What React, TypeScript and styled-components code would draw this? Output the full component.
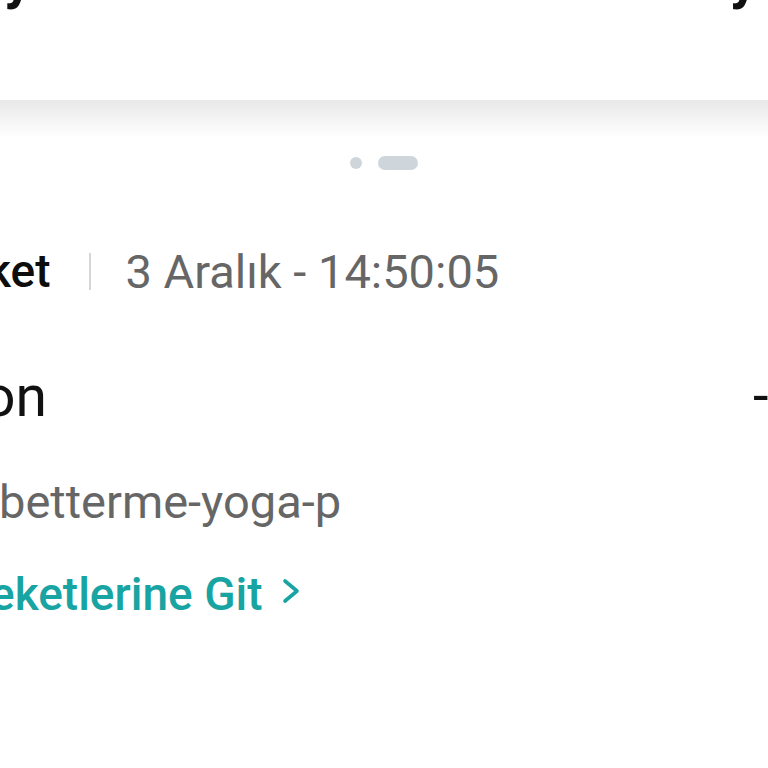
import styled, { createGlobalStyle } from "styled-components";

const GlobalStyle = createGlobalStyle`
  html, body {
    margin: 0;
    padding: 0;
    background: #ffffff;
  }
  body {
    font-family: Roboto, "Noto Sans", "Liberation Sans", sans-serif;
  }
`;

const Screen = styled.div`
  width: 768px;
  height: 768px;
  overflow: hidden;
  background: #ffffff;
  display: flex;
  flex-direction: column;
`;

const TopBar = styled.div`
  height: 100px;
  overflow: hidden;
  display: flex;
  justify-content: space-between;
  padding: 0 10px 0 4px;
`;

const TopText = styled.span`
  font-size: 56px;
  line-height: 1;
  font-weight: 700;
  color: #111111;
  margin-top: -49px;
`;

const Sheet = styled.div`
  display: flex;
  flex-direction: column;
`;

const Shade = styled.div`
  height: 38px;
  background: linear-gradient(#e8e8e8, #f6f6f6 60%, #ffffff);
`;

const Pager = styled.div`
  display: flex;
  justify-content: center;
  align-items: center;
  gap: 16px;
  margin-top: 18px;
  height: 14px;
`;

const Dot = styled.span<{ $wide?: boolean }>`
  display: block;
  width: ${(p) => (p.$wide ? "40px" : "12px")};
  height: ${(p) => (p.$wide ? "14px" : "12px")};
  border-radius: 8px;
  background: #cfd6db;
`;

const Row = styled.div<{ $top: number; $line: number }>`
  display: flex;
  align-items: center;
  margin-top: ${(p) => p.$top}px;
  height: ${(p) => p.$line}px;
  white-space: nowrap;
`;

const Text = styled.span<{ $size: number; $weight?: number; $color: string; $clip?: number }>`
  font-size: ${(p) => p.$size}px;
  font-weight: ${(p) => p.$weight ?? 400};
  color: ${(p) => p.$color};
  margin-left: ${(p) => p.$clip ?? 0}px;
  line-height: 1;
  flex-shrink: 0;
`;

const Divider = styled.span`
  width: 2px;
  height: 37px;
  background: #d6d6d6;
  margin: 0 35px 0 38px;
  flex-shrink: 0;
`;

const Amount = styled.span`
  margin-left: auto;
  width: 15px;
  flex-shrink: 0;
  font-size: 56px;
  line-height: 1;
  color: #111111;
  white-space: nowrap;
`;

const LinkRow = styled(Row)`
  color: #18a4a2;
`;

const Chevron = styled.svg`
  width: 18px;
  height: 26px;
  margin-left: 19px;
  margin-top: -6px;
  flex-shrink: 0;
`;

export default function App() {
  return (
    <>
      <GlobalStyle />
      <Screen>
        <TopBar>
          <TopText>y</TopText>
          <TopText>y</TopText>
        </TopBar>
        <Sheet>
          <Shade />
          <Pager>
            <Dot />
            <Dot $wide />
          </Pager>
          <Row $top={71} $line={60}>
            <Text $size={46} $weight={500} $color="#0d0d0d" $clip={-13}>
              ket
            </Text>
            <Divider />
            <Text $size={47} $color="#666666">
              3 Aralık - 14:50:05
            </Text>
          </Row>
          <Row $top={63} $line={64}>
            <Text $size={57} $color="#111111" $clip={-17}>
              on
            </Text>
            <Amount>-₺</Amount>
          </Row>
          <Row $top={45} $line={56}>
            <Text $size={47} $color="#666666" $clip={-1}>
              betterme-yoga-p
            </Text>
          </Row>
          <LinkRow $top={37} $line={56}>
            <Text $size={46} $weight={500} $color="#18a4a2" $clip={-10}>
              eketlerine Git
            </Text>
            <Chevron viewBox="0 0 18 26" fill="none">
              <polyline
                points="3,3 15,13 3,23"
                stroke="currentColor"
                strokeWidth="3.6"
                strokeLinecap="round"
                strokeLinejoin="round"
              />
            </Chevron>
          </LinkRow>
        </Sheet>
      </Screen>
    </>
  );
}
